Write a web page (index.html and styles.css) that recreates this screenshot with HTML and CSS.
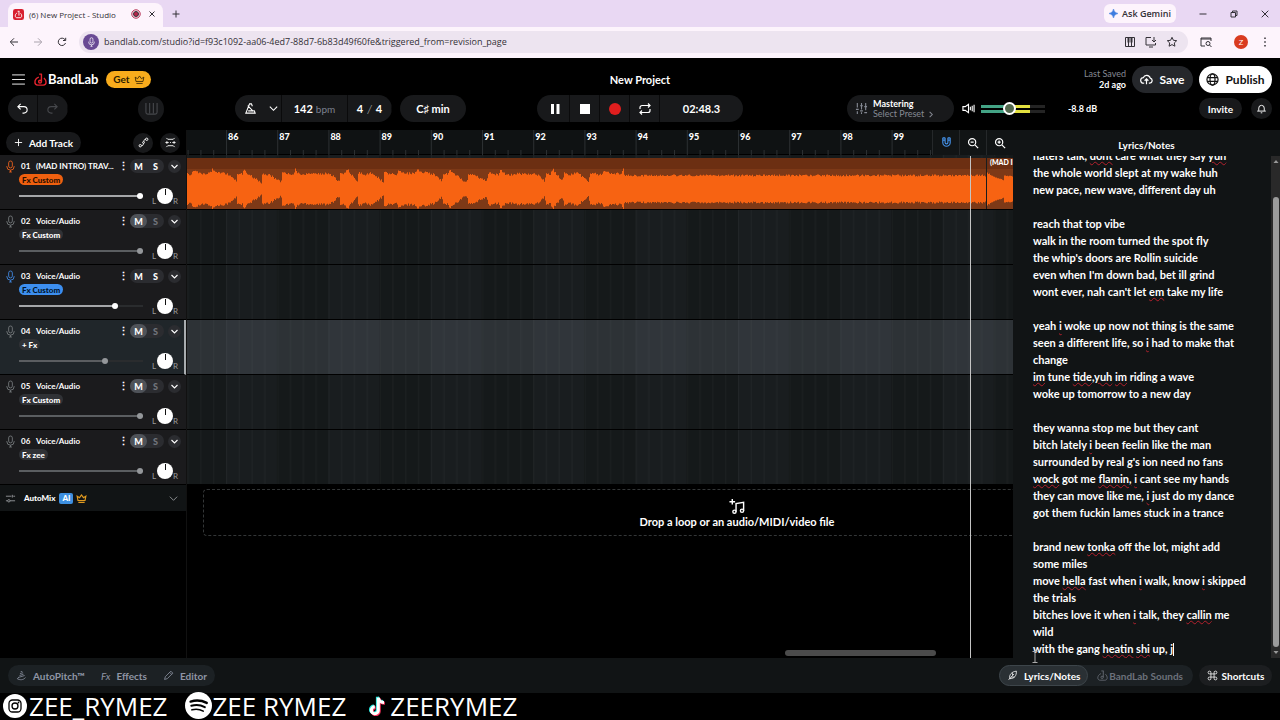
FILE: index.html
```
<!DOCTYPE html>
<html lang="en">
<head>
    <meta charset="UTF-8">
    <meta name="viewport" content="width=device-width, initial-scale=1.0">
    <title>(6) New Project - Studio</title>
    <link rel="stylesheet" href="styles.css">
</head>
<body>
    <!-- shared icons -->
    <svg class="sprite" aria-hidden="true">
        <symbol id="i-mic" viewBox="0 0 12 14"><rect x="4" y="1" width="4" height="7.5" rx="2"/><path d="M2 6.500v.5a4 4 0 0 0 8 0v-.5M6 11v2M4.500 13h3"/></symbol>
        <symbol id="i-chev" viewBox="0 0 12 12"><path d="M2 4l4 4 4-4"/></symbol>
        <symbol id="i-crown" viewBox="0 0 14 14"><path d="M2.500 9.500L1.500 4l3 2L7 2.500 9.500 6l3-2-1 5.500zM3 12h8"/></symbol>
        <symbol id="i-flask" viewBox="0 0 14 14"><path d="M5.500 1.200h3M8 1.200v3M5.200 4.500C2.500 5.500 1 8 1 10c0 2 1.500 3 3 3h6c1.600 0 3-1 3-3 0-1.500-.8-3.300-2.300-4.700M8 3.500v5.700"/><circle cx="6.500" cy="9.300" r="1.500"/></symbol>
        <symbol id="i-zoom" viewBox="0 0 14 14"><circle cx="6" cy="6" r="4.200"/><path d="M9.200 9.200L13 13M4.200 6h3.600"/></symbol>
    </svg>

    <div class="browser">
        <div class="tabs">
            <div class="tab">
                <svg class="favicon" viewBox="0 0 12 12"><rect width="12" height="12" rx="2.500" fill="#d81f30"/><path d="M5 2.500h2M6.500 2.500v4.700M4.500 4.300C3 5 2.500 6.300 2.500 7.500c0 1.300.8 2 1.800 2h3.400c1 0 1.800-.7 1.800-2 0-1-.4-2-1.300-2.800" fill="none" stroke="#fff"/></svg>
                <span class="tab-title">(6) New Project - Studio</span>
                <svg class="rec" viewBox="0 0 10 10"><circle cx="5" cy="5" r="4.200" fill="none" stroke="#b3264a"/><circle cx="5" cy="5" r="2.500" fill="#b3264a"/></svg>
                <button class="plain" aria-label="Close tab"><svg class="ico8" viewBox="0 0 8 8"><path d="M1.500 1.500l5 5M6.500 1.500l-5 5"/></svg></button>
            </div>
            <button class="plain new-tab" aria-label="New tab"><svg class="ico8" viewBox="0 0 8 8"><path d="M4 .5v7M.5 4h7"/></svg></button>
            <div class="window-tools">
                <button class="gemini"><svg viewBox="0 0 10 10"><path d="M5 0Q5.600 4.400 10 5 5.600 5.600 5 10 4.400 5.600 0 5 4.400 4.400 5 0z" fill="#3f7de0" stroke="#3f7de0" stroke-width=".6"/></svg>Ask Gemini</button>
                <button class="plain" aria-label="Minimize"><svg class="ico8" viewBox="0 0 8 8"><path d="M.5 4h7"/></svg></button>
                <button class="plain" aria-label="Restore"><svg class="ico8" viewBox="0 0 8 8"><path d="M1 2.500h4.500V7H1zM2.500 2.500V1H7v4.500H5.500"/></svg></button>
                <button class="plain" aria-label="Close"><svg class="ico8" viewBox="0 0 8 8"><path d="M.7.7l6.600 6.600M7.300.7L.7 7.300"/></svg></button>
            </div>
        </div>
        <div class="address-row">
            <button class="plain" aria-label="Back"><svg class="ico10" viewBox="0 0 10 10"><path d="M9 5H1.500M5 1.300L1.300 5 5 8.700"/></svg></button>
            <button class="plain dim" aria-label="Forward"><svg class="ico10" viewBox="0 0 10 10"><path d="M1 5h7.500M5 1.300L8.700 5 5 8.700"/></svg></button>
            <button class="plain" aria-label="Reload"><svg class="ico10" viewBox="0 0 10 10"><path d="M8.500 6A3.700 3.700 0 1 1 8 2.700M8.700.8v2.700H6"/></svg></button>
            <div class="omnibox">
                <span class="site-mic"><svg viewBox="0 0 12 14"><use href="#i-mic"/></svg></span>
                <input type="text" aria-label="Address" value="bandlab.com/studio?id=f93c1092-aa06-4ed7-88d7-6b83d49f60fe&amp;triggered_from=revision_page">
                <button class="plain" aria-label="MIDI"><svg class="ico12" viewBox="0 0 12 12"><path d="M1.500 1.500h9v9h-9zM4.500 1.500v9M7.500 1.500v9"/><path d="M4.500 2v4.500M7.500 2v4.500" stroke-width="2"/></svg></button>
                <button class="plain" aria-label="Install"><svg class="ico12" viewBox="0 0 12 12"><path d="M6 1.500H1v7.500h9.500V7M4 11h4M9 1v4.500M7 4l2 2 2-2"/></svg></button>
                <button class="plain" aria-label="Bookmark"><svg class="ico12" viewBox="0 0 12 12"><path d="M6 1.300l1.400 3 3.300.4-2.400 2.200.6 3.300L6 8.600l-2.900 1.600.6-3.300L1.300 4.700l3.300-.4z"/></svg></button>
            </div>
            <button class="plain" aria-label="Search page"><svg class="ico12" viewBox="0 0 12 12"><path d="M5 10H1V2h10v3M1 3h10"/><circle cx="8" cy="7.500" r="2"/><path d="M9.500 9l2 2"/></svg></button>
            <span class="avatar">Z</span>
            <button class="plain" aria-label="Menu"><svg class="ico12 dots" viewBox="0 0 12 12"><path d="M6 1.500V3M6 5.300v1.500M6 9v1.500"/></svg></button>
        </div>
    </div>

    <header class="app-header">
        <div class="header-left">
            <button class="plain" aria-label="Open menu"><svg class="burger" viewBox="0 0 14 12"><path d="M0 1h14M0 6h14M0 11h14"/></svg></button>
            <a class="logo" href="#"><svg viewBox="0 0 14 14"><use href="#i-flask"/></svg>BandLab</a>
            <button class="get">Get <svg viewBox="0 0 14 14"><use href="#i-crown"/></svg></button>
        </div>
        <h1>New Project</h1>
        <div class="header-right">
            <div class="saved">Last Saved<strong>2d ago</strong></div>
            <button class="save"><svg viewBox="0 0 14 14"><path d="M4.500 11H4A3 3 0 0 1 3.500 5 4 4 0 0 1 11 5.500 2.800 2.800 0 0 1 10.500 11H9.500M7 12V6.500M5 8.300l2-2 2 2"/></svg>Save</button>
            <button class="publish"><svg viewBox="0 0 14 14"><circle cx="7" cy="7" r="6"/><ellipse cx="7" cy="7" rx="2.700" ry="6"/><path d="M1.500 5h11M1.500 9h11"/></svg>Publish</button>
        </div>
    </header>

    <div class="toolbar">
        <div class="pill history">
            <button aria-label="Undo"><svg viewBox="0 0 14 14"><path d="M5 2L2 5l3 3M2 5h6.500a3.500 3.500 0 0 1 0 7H7"/></svg></button>
            <button class="off" aria-label="Redo"><svg viewBox="0 0 14 14"><path d="M9 2l3 3-3 3M12 5H5.500a3.500 3.500 0 0 0 0 7H7"/></svg></button>
        </div>
        <button class="round off keys" aria-label="Keyboard"><svg viewBox="0 0 14 14"><path d="M1 1v10a2 2 0 0 0 2 2h8a2 2 0 0 0 2-2V1M5 1v11M9 1v11"/></svg></button>
        <div class="pill tempo">
            <button class="metronome" aria-label="Metronome"><svg viewBox="0 0 14 14"><path d="M9 4.500L8 2H6L2 12h10l-1-3M4 4l6 6M4.500 9.500h6"/></svg><svg class="small" viewBox="0 0 12 12"><use href="#i-chev"/></svg></button>
            <button class="bpm">142 <small>bpm</small></button>
            <button class="meter-sig">4 <i>/</i> 4</button>
        </div>
        <button class="pill key">C♯ min</button>
        <div class="pill transport">
            <button aria-label="Pause"><svg viewBox="0 0 14 14"><path d="M3 2h3v10H3zM8.500 2h3v10h-3z" fill="#fff" stroke="none"/></svg></button>
            <button aria-label="Stop"><svg viewBox="0 0 14 14"><path d="M2 2h10v10H2z" fill="#fff" stroke="none"/></svg></button>
            <button aria-label="Record"><svg viewBox="0 0 14 14"><circle cx="7" cy="7" r="6" fill="#e01e1e" stroke="none"/></svg></button>
            <button aria-label="Loop"><svg viewBox="0 0 14 14"><path d="M2 7V5.500a2 2 0 0 1 2-2h8M10 1.500l2 2-2 2M12 7v1.500a2 2 0 0 1-2 2H2M4 8.500l-2 2 2 2"/></svg></button>
            <span class="clock">02:48.3</span>
        </div>
        <button class="pill mastering">
            <svg viewBox="0 0 14 14"><path d="M2.500 1v5M2.500 10v3M1 8h3M7 1v7M7 11v2M5.500 9.500h3M11.500 1v8M10 11.500h3M5.500 4h3M10 5h3"/></svg>
            <span><strong>Mastering</strong>Select Preset <svg class="tiny" viewBox="0 0 8 8"><path d="M3 1l3 3-3 3"/></svg></span>
        </button>
        <svg class="speaker" viewBox="0 0 14 14"><path d="M1 5h2.500L7 2.500v9L3.500 9H1zM9 5v4M11 4v6M13 3v8"/></svg>
        <input class="master-volume" type="range" aria-label="Master volume" min="0" max="100" value="43">
        <span class="db">-8.8 dB</span>
        <button class="invite">Invite</button>
        <button class="round bell" aria-label="Notifications"><svg viewBox="0 0 14 14"><path d="M3.500 10V6.500a3.500 3.500 0 0 1 7 0V10M1.500 10.300h11M6 12.500h2"/></svg></button>
    </div>

    <main class="studio">
        <section class="track-list">
            <div class="track-tools">
                <button class="add-track"><svg viewBox="0 0 10 10"><path d="M5 1v8M1 5h8"/></svg>Add Track</button>
                <button class="round" aria-label="Automation"><svg viewBox="0 0 12 12"><circle cx="2.500" cy="9.500" r="1.300"/><circle cx="9.500" cy="2.500" r="1.300"/><circle cx="6" cy="6" r="1"/><path d="M4 9.500c2 0 1.500-1.500 2-2.500M6.500 5c0-1.500 0-2.500 2-2.500"/></svg></button>
                <button class="round" aria-label="Fit tracks"><svg viewBox="0 0 12 12"><path d="M1.500 1l1.500 1.500h6L10.500 1M1.500 11L3 9.500h6l1.500 1.500M1 6h3M8 6h3M5.500 6h1M2.500 4.500L1 6l1.500 1.500M9.500 4.500L11 6 9.500 7.500"/></svg></button>
            </div>

            <article class="track orange">
                <div class="track-top">
                    <svg class="mic" viewBox="0 0 12 14"><use href="#i-mic"/></svg>
                    <b class="num">01</b><span class="name">(MAD INTRO) TRAV...</span>
                    <button class="more" aria-label="More">⋮</button>
                    <div class="ms"><button>M</button><button>S</button></div>
                    <button class="expand" aria-label="Expand"><svg viewBox="0 0 12 12"><use href="#i-chev"/></svg></button>
                </div>
                <button class="fx">Fx Custom</button>
                <div class="track-mix">
                    <input type="range" aria-label="Volume 01" value="100" style="--v: 100%">
                    <span class="pan"><i>L</i><b class="knob"></b><i>R</i></span>
                </div>
            </article>

            <article class="track muted">
                <div class="track-top">
                    <svg class="mic" viewBox="0 0 12 14"><use href="#i-mic"/></svg>
                    <b class="num">02</b><span class="name">Voice/Audio</span>
                    <button class="more" aria-label="More">⋮</button>
                    <div class="ms"><button>M</button><button>S</button></div>
                    <button class="expand" aria-label="Expand"><svg viewBox="0 0 12 12"><use href="#i-chev"/></svg></button>
                </div>
                <button class="fx">Fx Custom</button>
                <div class="track-mix">
                    <input type="range" aria-label="Volume 02" value="100" style="--v: 100%">
                    <span class="pan"><i>L</i><b class="knob"></b><i>R</i></span>
                </div>
            </article>

            <article class="track blue">
                <div class="track-top">
                    <svg class="mic" viewBox="0 0 12 14"><use href="#i-mic"/></svg>
                    <b class="num">03</b><span class="name">Voice/Audio</span>
                    <button class="more" aria-label="More">⋮</button>
                    <div class="ms"><button>M</button><button>S</button></div>
                    <button class="expand" aria-label="Expand"><svg viewBox="0 0 12 12"><use href="#i-chev"/></svg></button>
                </div>
                <button class="fx">Fx Custom</button>
                <div class="track-mix">
                    <input type="range" aria-label="Volume 03" value="79" style="--v: 79%">
                    <span class="pan"><i>L</i><b class="knob"></b><i>R</i></span>
                </div>
            </article>

            <article class="track muted selected">
                <div class="track-top">
                    <svg class="mic" viewBox="0 0 12 14"><use href="#i-mic"/></svg>
                    <b class="num">04</b><span class="name">Voice/Audio</span>
                    <button class="more" aria-label="More">⋮</button>
                    <div class="ms"><button>M</button><button>S</button></div>
                    <button class="expand" aria-label="Expand"><svg viewBox="0 0 12 12"><use href="#i-chev"/></svg></button>
                </div>
                <button class="fx">+ Fx</button>
                <div class="track-mix">
                    <input type="range" aria-label="Volume 04" value="70" style="--v: 70%">
                    <span class="pan"><i>L</i><b class="knob"></b><i>R</i></span>
                </div>
            </article>

            <article class="track muted">
                <div class="track-top">
                    <svg class="mic" viewBox="0 0 12 14"><use href="#i-mic"/></svg>
                    <b class="num">05</b><span class="name">Voice/Audio</span>
                    <button class="more" aria-label="More">⋮</button>
                    <div class="ms"><button>M</button><button>S</button></div>
                    <button class="expand" aria-label="Expand"><svg viewBox="0 0 12 12"><use href="#i-chev"/></svg></button>
                </div>
                <button class="fx">Fx Custom</button>
                <div class="track-mix">
                    <input type="range" aria-label="Volume 05" value="100" style="--v: 100%">
                    <span class="pan"><i>L</i><b class="knob"></b><i>R</i></span>
                </div>
            </article>

            <article class="track muted">
                <div class="track-top">
                    <svg class="mic" viewBox="0 0 12 14"><use href="#i-mic"/></svg>
                    <b class="num">06</b><span class="name">Voice/Audio</span>
                    <button class="more" aria-label="More">⋮</button>
                    <div class="ms"><button>M</button><button>S</button></div>
                    <button class="expand" aria-label="Expand"><svg viewBox="0 0 12 12"><use href="#i-chev"/></svg></button>
                </div>
                <button class="fx">Fx zee</button>
                <div class="track-mix">
                    <input type="range" aria-label="Volume 06" value="100" style="--v: 100%">
                    <span class="pan"><i>L</i><b class="knob"></b><i>R</i></span>
                </div>
            </article>

            <div class="automix">
                <svg class="automix-icon" viewBox="0 0 12 12"><path d="M1 3.500h6M9 3.500h2M8 2v3M1 8.500h2M5.500 8.500H11"/><circle cx="4.200" cy="8.500" r="1.300"/></svg>
                <span>AutoMix</span>
                <b class="ai">AI</b>
                <svg class="crown" viewBox="0 0 14 14"><use href="#i-crown"/></svg>
                <svg class="open" viewBox="0 0 12 12"><use href="#i-chev"/></svg>
            </div>
        </section>

        <section class="timeline">
            <div class="ruler">
                <svg class="ruler-ticks"><defs><pattern id="ticks" x="39" width="51.2" height="26" patternUnits="userSpaceOnUse"><path d="M.5 0v26M13.300 20v6M26.100 20v6M38.900 20v6" stroke="#2b2f31"/></pattern></defs><rect width="100%" height="26" fill="url(#ticks)"/></svg>
                <ol class="bars">
                    <li>86</li><li>87</li><li>88</li><li>89</li><li>90</li><li>91</li><li>92</li>
                    <li>93</li><li>94</li><li>95</li><li>96</li><li>97</li><li>98</li><li>99</li>
                </ol>
                <div class="zoom-tools">
                    <button aria-label="Snap to grid"><svg viewBox="0 0 14 14" class="magnet"><path d="M3 2v5a4 4 0 0 0 8 0V2M5.500 2v5a1.500 1.500 0 0 0 3 0V2M3 2h2.500M8.500 2H11M3 4.500h2.500M8.500 4.500H11"/></svg></button>
                    <button aria-label="Zoom out"><svg viewBox="0 0 14 14"><use href="#i-zoom"/></svg></button>
                    <button aria-label="Zoom in"><svg viewBox="0 0 14 14"><use href="#i-zoom"/><path d="M6 4.200v3.600"/></svg></button>
                </div>
            </div>
            <div class="lanes">
                <svg class="grid"><defs><pattern id="grid" x="39" width="102.4" height="55" patternUnits="userSpaceOnUse"><rect width="51.2" height="55" fill="#191d1f"/><rect x="51.2" width="51.2" height="55" fill="#15191a"/><path d="M.5 0v55M13.300 0v55M26.100 0v55M38.900 0v55M51.700 0v55M64.500 0v55M77.300 0v55M90.100 0v55" stroke="#fff" stroke-opacity=".035"/></pattern></defs><rect width="100%" height="100%" fill="url(#grid)"/></svg>
                <div class="lane"><svg class="wave" id="wave"></svg><span class="clip-name">(MAD INTRO) TRAV</span></div>
                <div class="lane"></div>
                <div class="lane"></div>
                <div class="lane selected"></div>
                <div class="lane"></div>
                <div class="lane"></div>
            </div>
            <div class="drop">
                <svg viewBox="0 0 18 18"><path d="M8 14.500V6l8-1.500v9M4 1v6M1 4h6"/><circle cx="6.300" cy="14.500" r="1.700"/><circle cx="14.300" cy="13.500" r="1.700"/></svg>
                <span>Drop a loop or an audio/MIDI/video file</span>
            </div>
            <div class="playhead"></div>
            <div class="h-scroll"></div>
        </section>

        <aside class="notes">
            <h2>Lyrics/Notes</h2>
            <div class="notes-body">
                <div class="lyrics" contenteditable="true" role="textbox" aria-multiline="true" aria-label="Lyrics/Notes" spellcheck="false">haters talk, <u>dont</u> care what they say <u>yuh</u>
the whole world slept at my wake huh
new pace, new wave, different day uh

reach that top vibe
walk in the room turned the spot fly
the whip's doors are Rollin suicide
even when I'm down bad, bet ill grind
wont ever, nah can't let <u>em</u> take my life

yeah <u>i</u> woke up now not thing is the same
seen a different life, so <u>i</u> had to make that
change
<u>im</u> tune <u>tide,yuh</u> <u>im</u> riding a wave
woke up tomorrow to a new day

they wanna stop me but they cant
bitch lately <u>i</u> been feelin like the man
surrounded by real g's ion need no fans
<u>wock</u> got me <u>flamin,</u> <u>i</u> cant see my hands
they can move like me, <u>i</u> just do my dance
got them fuckin lames stuck in a trance

brand new <u>tonka</u> off the lot, might add
some miles
move <u>hella</u> fast when <u>i</u> walk, know <u>i</u> skipped
the trials
bitches love it when <u>i</u> talk, they <u>callin</u> me
wild
with the gang <u>heatin</u> <u>shi</u> up, j<span class="caret"></span></div>
                <div class="v-scroll"><svg viewBox="0 0 8 8"><path d="M1.500 5.500h5L4 2.500z"/></svg><div class="thumb"></div><svg viewBox="0 0 8 8"><path d="M1.500 2.500h5L4 5.500z"/></svg></div>
                <svg class="ibeam" viewBox="0 0 6 12"><path d="M.5.500h5M3 .5v11M.5 11.500h5"/></svg>
            </div>
        </aside>
    </main>

    <nav class="bottom-bar">
        <div class="group">
            <button><svg viewBox="0 0 14 14"><path d="M6 2h2M5 4.500l4-1M4.500 7l5-1.500M3 9.500L11 7M2 11c2 2 8 2 10-1.500M3.500 9.500C2 10 1.500 11 2.500 12"/></svg>AutoPitch™</button>
            <button><em>Fx</em>Effects</button>
            <button><svg viewBox="0 0 14 14"><path d="M2 12l1-3.500 7-7L12.500 4l-7 7zM8.500 3L11 5.500"/></svg>Editor</button>
        </div>
        <div class="group right">
            <button class="active"><svg viewBox="0 0 14 14"><path d="M2 12.500L9 5M3.500 11C2.500 6 6 2 12 1.500c0 6-2.500 9.500-8.500 9.500M5.500 9h4M7 6.500V4"/></svg>Lyrics/Notes</button>
            <button class="sounds"><svg viewBox="0 0 14 14"><use href="#i-flask"/></svg>BandLab Sounds</button>
        </div>
        <button class="shortcuts"><svg viewBox="0 0 14 14"><path d="M5 5h4v4H5zM5 5H3.500A1.800 1.800 0 1 1 5 3.500zM9 5V3.500A1.800 1.800 0 1 1 10.500 5zM9 9h1.500A1.800 1.800 0 1 1 9 10.500zM5 9v1.500A1.800 1.800 0 1 1 3.500 9z"/></svg>Shortcuts</button>
    </nav>

    <footer class="socials">
        <span class="instagram"><svg viewBox="0 0 24 24"><circle cx="12" cy="12" r="12" fill="#fff"/><g fill="none" stroke="#000" stroke-width="1.300"><rect x="6" y="6" width="12" height="12" rx="3.500"/><circle cx="12" cy="12" r="3"/></g><circle cx="15.500" cy="8.500" r=".9"/></svg>ZEE_RYMEZ</span>
        <span class="spotify"><svg viewBox="0 0 24 24"><circle cx="12" cy="12" r="12" fill="#fff"/><g fill="none" stroke="#000" stroke-linecap="round"><path d="M5 8.500c5-1.500 10-1 14.300 1.200" stroke-width="2.200"/><path d="M5.600 12.300c4.300-1.200 8.500-.7 12 1.200" stroke-width="1.800"/><path d="M6.200 15.800c3.500-.9 7-.5 10 1.200" stroke-width="1.500"/></g></svg>ZEE RYMEZ</span>
        <span class="tiktok"><svg viewBox="0 0 20 24"><g fill="none" stroke-width="3.500"><path d="M10.500 2v14.500a4 4 0 1 1-4-4M10.500 2c.5 3.500 3 5.500 6.500 5.500" stroke="#25e5dd"/><path d="M12.500 4v14.500a4 4 0 1 1-4-4M12.500 4c.5 3.500 3 5.500 6.500 5.500" stroke="#f5305a"/><path d="M11.500 3v14.500a4 4 0 1 1-4-4M11.500 3c.5 3.500 3 5.500 6.500 5.500" stroke="#fff"/></g></svg>ZEERYMEZ</span>
    </footer>

    <script src="script.js"></script>
</body>
</html>
```
FILE: styles.css
```
* {
    box-sizing: border-box;
}

body {
    margin: 0;
    min-height: 100vh;
    display: flex;
    flex-direction: column;
    background: #000;
    color: #fff;
    font-family: Lato, "Open Sans", sans-serif;
    font-size: 11px;
    overflow: hidden;
}

svg {
    display: block;
    flex: none;
    fill: none;
    stroke: currentColor;
}

button, input {
    font: inherit;
    color: inherit;
    margin: 0;
    padding: 0;
    border: none;
    background: none;
}

button {
    display: flex;
    align-items: center;
    justify-content: center;
    flex: none;
    white-space: nowrap;
    cursor: pointer;
}

.sprite {
    position: absolute;
    width: 0;
    height: 0;
}

/* Browser chrome */
.browser {
    background: #fdf4fc;
    color: #333036;
    font-family: "Open Sans", "Noto Sans", sans-serif;
    font-size: 9px;
}

.tabs {
    height: 27px;
    display: flex;
    align-items: center;
    background: #e9d8f3;
    padding-left: 8px;
}

.tab {
    align-self: flex-end;
    width: 155px;
    height: 24px;
    display: flex;
    align-items: center;
    padding: 0 7px 2px 5px;
    border-radius: 8px 8px 0 0;
    background: #fdf4fc;
}

.favicon {
    width: 11px;
    height: 11px;
    stroke: none;
}

.tab-title {
    flex: 1;
    margin-left: 5px;
    font-size: 8px;
    white-space: nowrap;
}

.rec {
    width: 10px;
    height: 10px;
    margin-right: 7px;
}

.ico8 {
    width: 8px;
    height: 8px;
}

.ico10 {
    width: 10px;
    height: 10px;
}

.ico12 {
    width: 12px;
    height: 12px;
}

.dots {
    stroke-width: 1.5;
}

.new-tab {
    margin-left: 9px;
}

.window-tools {
    margin-left: auto;
    margin-right: 11px;
    display: flex;
    align-items: center;
    gap: 23px;
}

.gemini {
    width: 72px;
    height: 19px;
    gap: 4px;
    border-radius: 6px;
    background: #fdf4fc;
    font-weight: 600;
}

.gemini svg {
    width: 9px;
    height: 9px;
}

.address-row {
    height: 31px;
    display: flex;
    align-items: center;
    gap: 14px;
    padding: 0 9px 2px;
}

.dim {
    color: #aaa3ad;
}

.omnibox {
    flex: 1;
    height: 22px;
    display: flex;
    align-items: center;
    gap: 9px;
    margin: 0 -2px;
    padding: 0 10px 0 4px;
    border-radius: 11px;
    background: #ede4f0;
}

.omnibox input {
    flex: 1;
    min-width: 0;
    margin-left: -4px;
    outline: none;
}

.site-mic {
    width: 16px;
    height: 16px;
    display: grid;
    place-items: center;
    border-radius: 50%;
    background: #694a94;
    color: #fff;
}

.site-mic svg {
    width: 9px;
    height: 10px;
}

.avatar {
    width: 14px;
    height: 14px;
    margin: 0 -3px 0 8px;
    border-radius: 50%;
    background: #d93b20;
    color: #fff;
    font-size: 8px;
    line-height: 14px;
    text-align: center;
}

/* Header */
.app-header {
    display: grid;
    grid-template-columns: 1fr auto 1fr;
    align-items: center;
    height: 38px;
    padding: 4px 8px 0 12px;
}

.header-left, .header-right {
    display: flex;
    align-items: center;
}

.header-right {
    justify-content: flex-end;
    gap: 6px;
}

.burger {
    width: 13px;
    height: 11px;
}

.logo {
    display: flex;
    align-items: center;
    gap: 1px;
    margin-left: 9px;
    color: #fff;
    font-size: 13px;
    font-weight: bold;
    text-decoration: none;
}

.logo svg {
    width: 13px;
    height: 13px;
    color: #e5232e;
    stroke-width: 1.5;
}

.get {
    width: 45px;
    height: 17px;
    gap: 4px;
    margin-left: 8px;
    border-radius: 9px;
    background: #f8ac1c;
    color: #2b1c00;
    font-weight: bold;
    font-size: 10px;
}

.get svg {
    width: 11px;
    height: 11px;
}

h1 {
    margin: 0 4px 0 0;
    font-size: 11px;
    font-weight: bold;
}

.saved {
    color: #858993;
    font-size: 9px;
    line-height: 11px;
    text-align: right;
}

.saved strong {
    display: block;
    color: #fff;
}

.save, .publish {
    height: 27px;
    gap: 6px;
    border-radius: 14px;
    font-size: 12px;
    font-weight: bold;
}

.save {
    width: 61px;
    background: #25272b;
}

.publish {
    width: 73px;
    background: #fff;
    color: #111;
}

.save svg, .publish svg {
    width: 13px;
    height: 13px;
    stroke-width: 1.3;
}

/* Transport toolbar */
.toolbar {
    display: flex;
    align-items: center;
    height: 34px;
    padding: 0 8px 9px;
}

.pill {
    display: flex;
    height: 27px;
    border-radius: 14px;
    background: #18191b;
    overflow: hidden;
}

.pill > button {
    padding: 0 8px;
    border-right: 1px solid #0a0a0b;
}

.pill svg, .round svg, .speaker {
    width: 13px;
    height: 13px;
    stroke-width: 1.2;
}

.toolbar .off {
    color: #46484c;
}

.history > button {
    width: 30px;
}

.round {
    border-radius: 50%;
    background: #18191b;
}

.keys {
    width: 26px;
    height: 26px;
    margin-left: 70px;
}

.tempo {
    margin-left: 71px;
    font-size: 11px;
    font-weight: bold;
}

.pill > .metronome {
    width: 47px;
    gap: 11px;
    padding: 0 2px 0 8px;
}

.pill .small {
    width: 11px;
    height: 11px;
}

.bpm {
    width: 66px;
    gap: 3px;
}

.bpm small {
    color: #7d8190;
    font-size: 10px;
    font-weight: normal;
}

.meter-sig {
    width: 44px;
    gap: 4px;
}

.meter-sig i {
    color: #999;
    font-weight: normal;
}

.key {
    width: 66px;
    margin-left: 8px;
    align-items: center;
    font-weight: bold;
}

.transport {
    margin-left: 71px;
}

.transport > button {
    width: 30px;
    padding: 0;
}

.transport > button:first-child {
    width: 33px;
    padding-left: 3px;
}

.transport svg {
    width: 14px;
    height: 14px;
}

.clock {
    width: 83px;
    line-height: 27px;
    text-align: center;
    font-weight: bold;
}

.mastering {
    width: 107px;
    margin-left: 104px;
    gap: 5px;
    justify-content: flex-start;
    align-items: center;
    padding-left: 8px;
    color: #858993;
    font-size: 9px;
    line-height: 10px;
    text-align: left;
}

.mastering strong {
    display: block;
    color: #fff;
}

.mastering .tiny {
    display: inline;
    width: 7px;
    height: 7px;
    vertical-align: -1px;
}

.speaker {
    margin-left: 8px;
}

.master-volume {
    appearance: none;
    width: 64px;
    height: 14px;
    margin-left: 6px;
    background:
        linear-gradient(#000, #000) center / 100% 2px no-repeat,
        linear-gradient(to right, #43a385 0 28px, #e3e03f 28px 49px, #242424 49px) center / 100% 8px no-repeat;
}

.master-volume::-webkit-slider-thumb {
    appearance: none;
    width: 13px;
    height: 13px;
    border: 2px solid #fff;
    border-radius: 50%;
    background: #52684d;
}

.db {
    margin-left: 23px;
    font-size: 9px;
    font-weight: bold;
}

.invite {
    width: 43px;
    height: 21px;
    margin-left: auto;
    border-radius: 11px;
    background: #18191b;
    font-size: 10px;
    font-weight: bold;
}

.bell {
    width: 21px;
    height: 21px;
    margin-left: 9px;
}

.bell svg {
    width: 11px;
    height: 11px;
}

/* Studio */
.studio {
    flex: 1;
    display: grid;
    grid-template-columns: 187px minmax(0, 1fr) 267px;
    min-height: 0;
}

.track-list {
    border-right: 1px solid #111;
}

.track-tools {
    display: flex;
    align-items: center;
    gap: 7px;
    height: 25px;
    padding: 0 6px;
}

.add-track {
    width: 75px;
    height: 21px;
    gap: 6px;
    margin-right: auto;
    border-radius: 11px;
    background: #18191b;
    font-size: 10px;
    font-weight: bold;
}

.add-track svg {
    width: 9px;
    height: 9px;
}

.track-tools .round {
    width: 20px;
    height: 20px;
}

.track-tools .round svg {
    width: 11px;
    height: 11px;
    stroke-width: 1;
}

.track {
    height: 55px;
    padding-top: 4px;
    border-bottom: 1px solid #000;
    background: #1b1b1d;
    font-size: 8px;
}

.track.selected {
    background: #20262a;
    border-right: 2px solid #a9adb0;
}

.track-top {
    display: flex;
    align-items: center;
    height: 14px;
    padding: 0 5px;
}

.selected .track-top {
    padding-right: 3px;
}

.mic {
    width: 11px;
    height: 13px;
    color: #73777a;
}

.orange .mic {
    color: #e8601c;
}

.blue .mic {
    color: #3f86dd;
}

.num {
    flex: none;
    width: 15px;
    margin-left: 5px;
}

.name {
    flex: 1;
    min-width: 0;
    font-weight: bold;
    white-space: nowrap;
}

.more {
    width: 8px;
    margin-right: 3px;
    font-size: 11px;
    font-weight: bold;
}

.ms {
    display: flex;
    border-radius: 7px;
    background: #2b2c30;
}

.ms button {
    width: 17px;
    height: 14px;
    border-radius: 7px;
    font-size: 9px;
    font-weight: 900;
}

.muted .ms button:first-child {
    background: #4f5359;
}

.muted .ms button:last-child {
    color: #71757c;
}

.expand {
    width: 13px;
    height: 13px;
    margin-left: 4px;
    border-radius: 50%;
    background: #2b2c30;
}

.expand svg {
    width: 9px;
    height: 9px;
    stroke-width: 1.5;
}

.fx {
    height: 11px;
    margin: 1px 0 0 19px;
    padding: 0 3px;
    border-radius: 6px;
    background: #303236;
    font-size: 8px;
    font-weight: 900;
}

.orange .fx {
    background: #f0600f;
    color: #2a0f00;
}

.blue .fx {
    background: #3d8ff0;
    color: #00142d;
}

.track-mix {
    display: flex;
    align-items: center;
    height: 22px;
    padding-left: 19px;
}

.track-mix input {
    --fill: #a5a7a9;
    appearance: none;
    width: 124px;
    height: 10px;
    background: linear-gradient(to right, var(--fill) var(--v), #2a2c2e var(--v)) center / 100% 2px no-repeat;
}

.muted .track-mix input {
    --fill: #5b5e61;
}

.track-mix input::-webkit-slider-thumb {
    appearance: none;
    width: 6px;
    height: 6px;
    border-radius: 50%;
    background: #fff;
}

.muted .track-mix input::-webkit-slider-thumb {
    background: #94979a;
}

.pan {
    display: flex;
    align-items: center;
    margin-left: 9px;
    color: #9a9a9a;
}

.pan i {
    align-self: flex-end;
    width: 5px;
    font-style: normal;
    line-height: 6px;
}

.knob {
    width: 16px;
    height: 16px;
    border-radius: 50%;
    background: linear-gradient(#111, #111) center 1px / 1px 6px no-repeat, #fff;
}

.automix {
    display: flex;
    align-items: center;
    height: 26px;
    padding: 0 7px 0 5px;
    background: #111415;
    font-size: 8px;
    font-weight: 900;
}

.automix svg {
    width: 11px;
    height: 11px;
    color: #94979a;
}

.automix span {
    margin-left: 8px;
}

.ai {
    margin: 0 3px 0 4px;
    padding: 0 3px;
    border-radius: 2px;
    background: #3d8fe0;
    line-height: 11px;
}

.automix .crown {
    color: #e09a20;
    stroke-width: 1.5;
}

.automix .open {
    margin-left: auto;
}

/* Timeline */
.timeline {
    position: relative;
    overflow: hidden;
    display: flex;
    flex-direction: column;
}

.ruler {
    position: relative;
    height: 25px;
    background: #0f1213;
    border-bottom: 1px solid #000;
}

.ruler-ticks {
    position: absolute;
    width: 100%;
    height: 26px;
    stroke: none;
}

.bars {
    position: relative;
    display: grid;
    grid-template-columns: repeat(15, 1fr);
    margin: 0 17px 0 41px;
    padding: 0;
    list-style: none;
    font-size: 9px;
    font-weight: 900;
    line-height: 14px;
}

.zoom-tools {
    position: absolute;
    top: 0;
    right: 0;
    display: flex;
    height: 25px;
    background: #111415;
}

.zoom-tools button {
    width: 27px;
    border-left: 1px solid #25282a;
}

.zoom-tools svg {
    width: 12px;
    height: 12px;
    stroke-width: 1.4;
}

.zoom-tools .magnet {
    width: 13px;
    height: 13px;
    color: #4592ea;
    stroke-width: 1.2;
}

.lanes {
    position: relative;
}

.grid {
    position: absolute;
    width: 100%;
    height: 100%;
    stroke: none;
}

.lane {
    position: relative;
    height: 55px;
    border-bottom: 1px solid #000;
}

.lane.selected {
    background: rgba(130, 140, 155, 0.22);
}

.wave {
    width: 100%;
    height: 54px;
    stroke: none;
}

.clip-name {
    position: absolute;
    top: 3px;
    left: 803px;
    font-size: 7px;
    font-weight: 900;
    line-height: 9px;
    white-space: nowrap;
}

.drop {
    display: flex;
    flex-direction: column;
    align-items: center;
    justify-content: center;
    height: 47px;
    margin: 4px -258px 0 16px;
    border: 1px dashed #333637;
    border-radius: 4px;
    font-weight: bold;
}

.drop svg {
    width: 18px;
    height: 17px;
    stroke-width: 1.5;
}

.playhead {
    position: absolute;
    top: 26px;
    bottom: 0;
    right: 42px;
    width: 1px;
    background: #c4c4c4;
}

.h-scroll {
    position: absolute;
    right: 77px;
    bottom: 2px;
    width: 151px;
    height: 6px;
    border-radius: 3px;
    background: #4b4b4b;
}

/* Lyrics */
.notes {
    display: flex;
    flex-direction: column;
    min-height: 0;
    background: #111415;
}

.notes h2 {
    margin: 0;
    padding-top: 5px;
    height: 26px;
    font-size: 10px;
    line-height: 20px;
    text-align: center;
}

.notes-body {
    position: relative;
    flex: 1;
    display: flex;
    min-height: 0;
}

/* scrolled down by half a line */
.lyrics {
    flex: 1;
    margin-top: -9px;
    padding-left: 20px;
    clip-path: inset(9px 0 0 0);
    outline: none;
    font-size: 11px;
    font-weight: bold;
    line-height: 17px;
    white-space: pre;
}

.lyrics u {
    text-decoration: underline wavy #b3202c 1px;
    text-underline-offset: 1px;
}

.caret {
    display: inline-block;
    width: 1px;
    height: 13px;
    background: #fff;
    vertical-align: -3px;
}

.v-scroll {
    width: 9px;
    display: flex;
    flex-direction: column;
    align-items: center;
    background: #292929;
}

.v-scroll svg {
    width: 8px;
    height: 11px;
    fill: #999;
    stroke: none;
}

.thumb {
    flex: 1;
    width: 6px;
    margin-top: 30px;
    border-radius: 3px;
    background: #9b9b9b;
}

.ibeam {
    position: absolute;
    left: 19px;
    bottom: -5px;
    width: 6px;
    height: 12px;
    color: #aaa;
}

/* Bottom bar */
.bottom-bar {
    display: flex;
    align-items: center;
    gap: 6px;
    height: 35px;
    padding: 0 8px;
    background: #111415;
    font-size: 10px;
    font-weight: bold;
}

.group {
    display: flex;
    height: 21px;
    border-radius: 11px;
    background: #1c2124;
    color: #8f95a5;
}

.group button {
    gap: 6px;
    padding: 0 8px;
}

.bottom-bar svg {
    width: 11px;
    height: 11px;
}

.bottom-bar em {
    font-weight: normal;
}

.right {
    margin-left: auto;
}

.group .active {
    width: 89px;
    border: 1px solid #3d454a;
    border-radius: 11px;
    background: #2a3034;
    color: #fff;
}

.group .sounds {
    gap: 1px;
    padding: 0 10px 0 9px;
    color: #6c717b;
}

.shortcuts {
    width: 73px;
    height: 21px;
    gap: 4px;
    border-radius: 11px;
    background: #1c1e20;
}

.socials {
    display: flex;
    align-items: center;
    height: 27px;
    padding-left: 3px;
    font-family: "Open Sans", "Noto Sans", sans-serif;
    font-size: 26px;
    line-height: 24px;
}

.socials span {
    display: flex;
    align-items: center;
    height: 24px;
    margin-bottom: 2px;
}

.socials svg {
    stroke: none;
}

.instagram svg {
    width: 24px;
    height: 24px;
    margin-right: 2px;
    fill: #000;
}

.spotify {
    margin-left: 18px;
}

.spotify svg {
    width: 27px;
    height: 27px;
}

.tiktok {
    margin-left: 22px;
}

.tiktok svg {
    width: 18px;
    height: 21px;
    margin-right: 4px;
}
```
FILE: script.js
```
// four-bar loudness envelope of the clip: [x, half height]
const loop = [[0, 19], [5, 17], [12, 16], [17, 17], [19, 21], [21, 18], [26, 17], [36, 15], [43, 9], [44, 15], [49, 16], [51, 21], [53, 17], [58, 14], [66, 8], [68, 7],
    [69, 16], [76, 15], [84, 10], [88, 8], [89, 17], [100, 15], [102, 21], [104, 17], [108, 15], [120, 16], [133, 16], [140, 14], [146, 8],
    [147, 16], [152, 16], [154, 21], [156, 17], [160, 13], [164, 9], [165, 17], [172, 15], [178, 17], [185, 12], [190, 8], [191, 17], [203, 15], [205.6, 20]];
const wave = document.getElementById('wave');
const width = wave.clientWidth;
const middle = 34;
const firstEnd = 799;

function envelope(x) {
    const p = x % 205.6;
    for (let i = 1; i < loop.length; i++) {
        if (p <= loop[i][0]) {
            const [x0, a0] = loop[i - 1];
            const [x1, a1] = loop[i];
            return a0 + (a1 - a0) * (p - x0) / (x1 - x0);
        }
    }
    return 15;
}

function noise(x) {
    const n = Math.sin(x * 127.1) * 43758.5453;
    return n - Math.floor(n);
}

function shape(from, to, amp) {
    let top = '';
    let bottom = '';
    for (let x = from; x < to; x++) {
        const a = amp(x);
        top += `L${x} ${(middle - a).toFixed(1)}L${x + 1} ${(middle - a).toFixed(1)}`;
        bottom = `L${x + 1} ${(middle + a).toFixed(1)}L${x} ${(middle + a).toFixed(1)}` + bottom;
    }
    return `<path fill="#f76312" d="M${from} ${middle}${top}${bottom}Z"/>`;
}

function clip(from, to, amp) {
    return `<rect x="${from}" y="3" width="${to - from}" height="51" fill="#7d3917"/>
        <rect x="${from}" y="3" width="${to - from}" height="11" fill="#6c2f12"/>` + shape(from, to, amp);
}

wave.innerHTML =
    clip(0, firstEnd, x => x < 437 ? envelope(x + 199.6) + 0.5 - noise(x) * 2.5 : 14.5 - noise(x) * 2) +
    clip(firstEnd + 1, width, x => {
        const d = x - firstEnd;
        return (d < 18 ? 17 - d * 0.45 : 14) - noise(x) * 1.5;
    });
```
